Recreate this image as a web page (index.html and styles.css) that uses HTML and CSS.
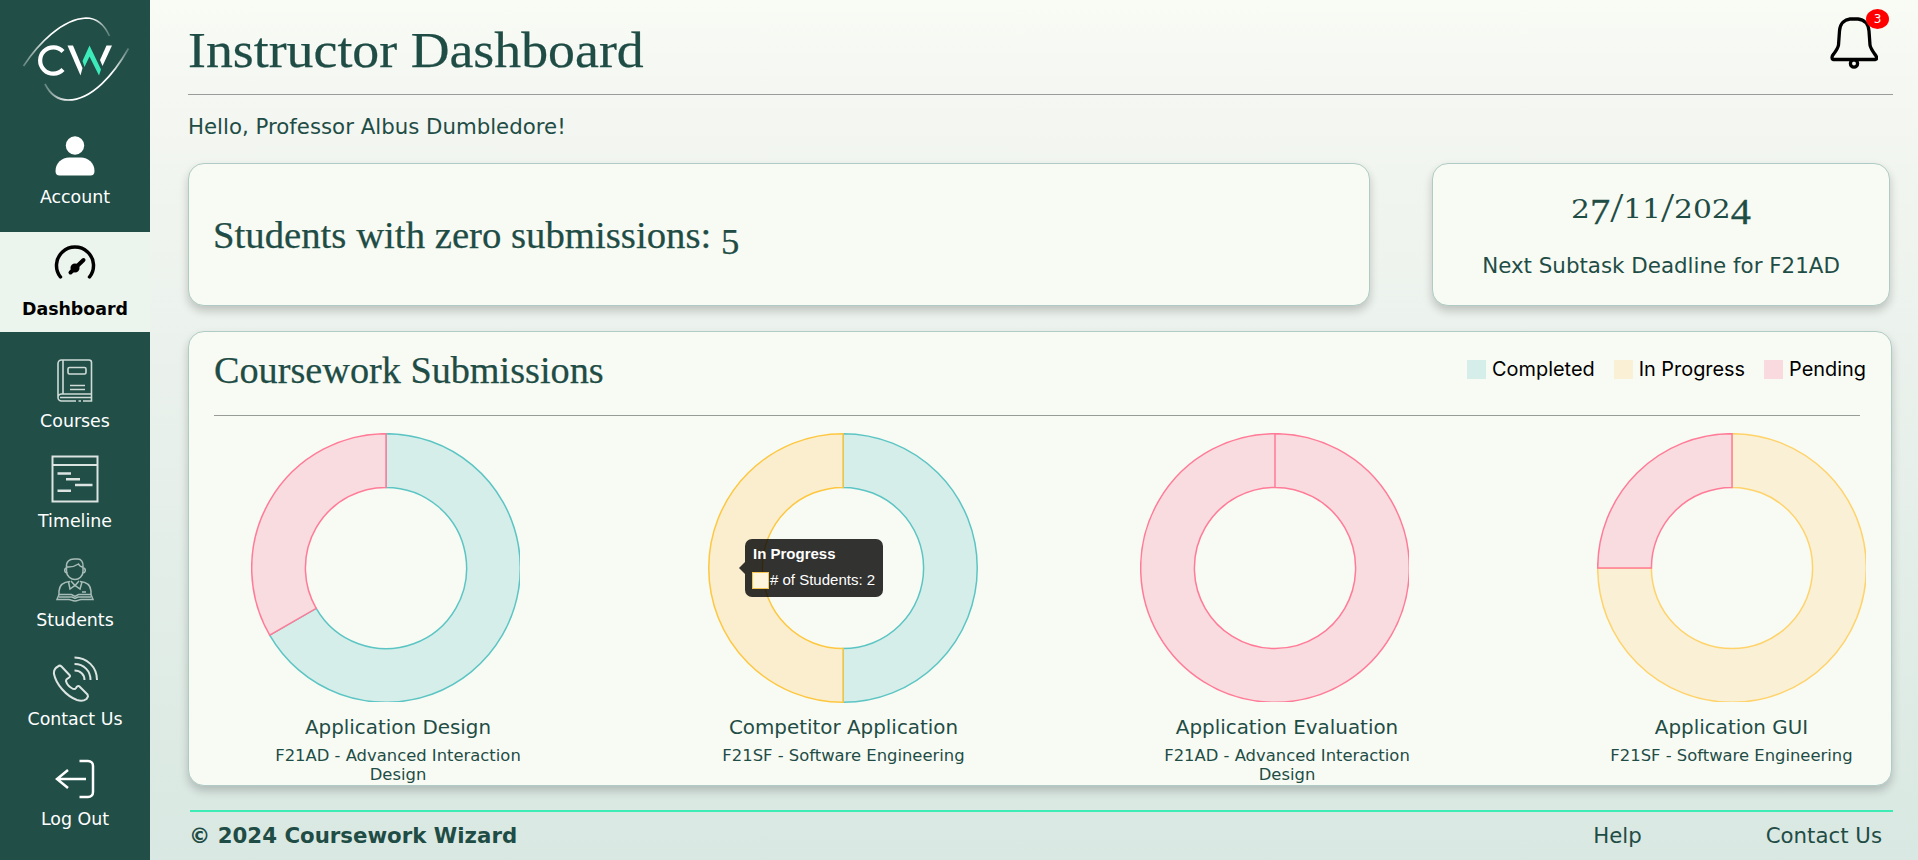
FILE: index.html
```html
<!DOCTYPE html>
<html lang="en">
<head>
<meta charset="utf-8">
<title>Instructor Dashboard</title>
<link rel="stylesheet" href="styles.css">
</head>
<body>
<div class="app">
  <nav class="sidebar">
    <svg class="logo" viewBox="0 0 110 88" width="110" height="88" fill="none">
      <defs>
        <linearGradient id="fadeA" x1="0" x2="1"><stop offset="0" stop-color="#fff" stop-opacity=".3"/><stop offset=".3" stop-color="#fff"/><stop offset=".8" stop-color="#fff"/><stop offset="1" stop-color="#fff" stop-opacity=".25"/></linearGradient>
      </defs>
      <path d="M3.500 50C18 28 42 3 66 2c12 0 19 8 23.500 18" stroke="url(#fadeA)" stroke-width="1.700"/>
      <path d="M25 68c5 10 13 16 23 16C72 84 94 58 108.500 32.500" stroke="url(#fadeA)" stroke-width="1.700"/>
      <path d="M43 35.500A13.200 13.200 0 1 0 43 53.500" stroke="#fff" stroke-width="4.200"/>
      <path d="M47.500 29.500h5.500L62.500 52l-2 7.500z" fill="#fff"/>
      <path d="M62.500 45 69.500 29.500 81 53.500l-2 6L69.500 40.500 64.500 51z" fill="#3cebb9"/>
      <path d="M86.500 29.500h5.500L82.500 50l-2.500-6z" fill="#fff"/>
    </svg>

    <a class="nav-item account">
      <svg viewBox="0 0 40 40" width="40" height="40" fill="#fff"><circle cx="20" cy="9.500" r="9.200"/><path d="M.500 35C.500 27 7 21.500 14 21.500h12c7 0 13.500 5.500 13.500 13.500 0 3-1.500 4.500-4 4.500h-31c-2.500 0-4-1.500-4-4.500z"/></svg>
      <span>Account</span>
    </a>
    <a class="nav-item active">
      <svg viewBox="0 0 44 44" width="44" height="44" fill="none" stroke="#000" stroke-width="3.500" stroke-linecap="round"><path d="M7.500 35A18.500 18.500 0 1 1 36.500 35"/><path d="M17.500 30.500 30.500 18" stroke-width="4"/><circle cx="22" cy="26" r="2.800" fill="#000"/></svg>
      <span>Dashboard</span>
    </a>
    <a class="nav-item courses">
      <svg viewBox="0 0 36 43" width="36" height="43" fill="none" stroke="#d0dbd8" stroke-width="1.600"><path d="M1 38V4.500C1 2.500 2.500 1 4.500 1H32c1.500 0 2.500 1 2.500 2.500V35H4.500A3.500 3.500 0 0 0 4.500 42H19M26 42h8.500V35M21.500 42h2.500M6 1v34M3 38.500h31"/><rect x="11" y="8.500" width="18" height="6.500" rx="1.500"/><path d="M13 26.500h15M13 30.500h15"/></svg>
      <span>Courses</span>
    </a>
    <a class="nav-item timeline">
      <svg viewBox="0 0 48 48" width="48" height="48" fill="none" stroke="#dbe4e1" stroke-width="2"><path d="M1.500 1.500h45v45h-45zM1.500 10h45"/><path d="M6.500 18.500H20M15 24.200h14M24 30h17.500M6.500 35.800H20" stroke-width="2.600"/></svg>
      <span>Timeline</span>
    </a>
    <a class="nav-item students">
      <svg viewBox="0 0 38 44" width="38" height="44" fill="none" stroke="#a9bdb8" stroke-width="1.500"><path d="M10.500 9C10 3.500 13.500 1 18 1h4c3 0 5.500 3 5 7.500v5C27 18 23 21.500 19 21.500S10.500 18 10.500 13.500z"/><path d="M10.500 9c5 .5 9-1 12-3 1 2 2.500 3 4.500 3M10.500 10c-3 1-2 5 1 5M27.500 10c3 1 2 5-1 5"/><path d="M14 23.500C7 24 3.500 27 3 33v3.500M24 23.500c7 .5 10.500 3.500 11 9.500v3.500"/><path d="m12.500 24 1.500 7 5-3.500L24 31l2-7M15 23l4 4.500 4-4.500"/><path d="M3 36.500 1 41.500h12c2 0 3 1.500 6 1.500s4-1.500 6-1.500h12l-2-5H22.500L19 38.500l-3.500-2zM3 39h13l3 1.500L22 39h13M26 34h4"/></svg>
      <span>Students</span>
    </a>
    <a class="nav-item">
      <svg viewBox="0 0 46 46" width="46" height="46" fill="none" stroke="#dbe4e1" stroke-width="2" stroke-linejoin="round"><path d="M6 10.500C3 12 1.500 14 2 18c2 10 12 22 23 26 4 1.300 7 .8 9.500-1l1.500-2.500-.500-2-8-8C26.500 29.500 25 30 24 32c-1 1.500-3 1-4.500 0-2.500-1.500-5-4.500-5.500-7-.3-1.500 1-2 2.500-3s2-2 1-3l-8-8.500c-1-1-2.500-1-3.500 0z"/><path d="M22.500 1.500C35 1.500 45 11 45 24M22.500 8C32 8 38.500 15 38.500 24M22.500 14.500c6 0 10 4 10 9.500"/></svg>
      <span>Contact Us</span>
    </a>
    <a class="nav-item logout">
      <svg viewBox="0 0 40 40" width="40" height="40" fill="none" stroke="#fff" stroke-width="2.500"><path d="M24.500 2H33c3 0 5 2 5 5v26c0 3-2 5-5 5h-8.500M31 20H2M13 11 2 20l11 9"/></svg>
      <span>Log Out</span>
    </a>
  </nav>

  <main class="main">
    <header class="header">
      <h1 class="serif title">Instructor Dashboard</h1>
      <div class="bell">
        <svg viewBox="0 0 48 54" width="48" height="54" fill="none" stroke="#000" stroke-width="3.300" stroke-linejoin="round"><path d="M3 43.500C1.500 43 1.800 40 3.300 38.500 6 35 8 32 8.500 29L9.500 15C10 7 15 3.500 20 3h8c6 .5 10.500 5 11 12l1 14c.5 3 2.500 6 5 9.500 1.500 1.500 2.500 4.500.5 5z"/><circle cx="24" cy="47.500" r="3.600"/></svg>
        <span class="badge">3</span>
      </div>
    </header>
    <p class="hello">Hello, Professor Albus Dumbledore!</p>

    <section class="stats">
      <div class="card zero"><h2 class="serif heading">Students with zero submissions: <span class="low">5</span></h2></div>
      <div class="card deadline">
        <div class="date"><span class="mid">2</span><span class="low">7</span><span class="slash">/</span><span class="mid">11</span><span class="slash">/</span><span class="mid">202</span><span class="low">4</span></div>
        <p class="next">Next Subtask Deadline for F21AD</p>
      </div>
    </section>

    <section class="card submissions">
      <div class="sub-head">
        <h2 class="serif heading cs">Coursework Submissions</h2>
        <ul class="legend">
          <li><i class="sw done"></i>Completed</li>
          <li><i class="sw prog"></i>In Progress</li>
          <li><i class="sw pend"></i>Pending</li>
        </ul>
      </div>
      <div class="charts">
        <figure class="chart wide">
          <svg class="donut" viewBox="0 0 269 269" width="269" height="269">
            <path class="s-done" d="M135 .700A134.300 134.300 0 1 1 18.700 202.150L65.200 175.300A80.600 80.600 0 1 0 135 54.400z"/>
            <path class="s-pend" d="M18.700 202.150A134.300 134.300 0 0 1 135 .700V54.400A80.600 80.600 0 0 0 65.200 175.300z"/>
          </svg>
          <figcaption><b>Application Design</b><span>F21AD - Advanced Interaction Design</span></figcaption>
        </figure>
        <figure class="chart second">
          <svg class="donut" viewBox="0 0 269 269" width="269" height="269">
            <path class="s-done" d="M134 .700A134.300 134.300 0 0 1 134 269.300V215.600A80.600 80.600 0 0 0 134 54.400z"/>
            <path class="s-prog hot" d="M134 269.300A134.300 134.300 0 0 1 134 .700V54.400A80.600 80.600 0 0 0 134 215.600z"/>
          </svg>
          <div class="tooltip"><strong>In Progress</strong><div class="row"><i></i># of Students: 2</div></div>
          <figcaption><b>Competitor Application</b><span>F21SF - Software Engineering</span></figcaption>
        </figure>
        <figure class="chart wide">
          <svg class="donut" viewBox="0 0 269 269" width="269" height="269">
            <path class="s-pend" fill-rule="evenodd" d="M135 .700A134.300 134.300 0 1 1 134.990 .700V54.400A80.600 80.600 0 1 0 135 54.400z"/>
          </svg>
          <figcaption><b>Application Evaluation</b><span>F21AD - Advanced Interaction Design</span></figcaption>
        </figure>
        <figure class="chart">
          <svg class="donut" viewBox="0 0 269 269" width="269" height="269">
            <path class="s-prog" d="M135 .700A134.300 134.300 0 1 1 .700 135H54.400A80.600 80.600 0 1 0 135 54.400z"/>
            <path class="s-pend" d="M.700 135A134.300 134.300 0 0 1 135 .700V54.400A80.600 80.600 0 0 0 54.400 135z"/>
          </svg>
          <figcaption><b>Application GUI</b><span>F21SF - Software Engineering</span></figcaption>
        </figure>
      </div>
    </section>

    <footer class="footer">
      <strong>© 2024 Coursework Wizard</strong>
      <span class="links"><a>Help</a><a>Contact Us</a></span>
    </footer>
  </main>
</div>
</body>
</html>
```

FILE: styles.css
```css
* { box-sizing: border-box; margin: 0; padding: 0; }
body { font-family: "DejaVu Sans", sans-serif; color: #1f4d46; }
.app { display: flex; width: 1918px; height: 860px; overflow: hidden; background: linear-gradient(#f9fbf5 0, #f3f6f1 14%, #d9e8e2 100%); }

/* Sidebar */
.sidebar { width: 150px; height: 860px; flex: none; background: #214e47; color: #fff; display: flex; flex-direction: column; }
.logo { margin: 16px 0 0 20px; flex: none; display: block; }
.nav-item { height: 99.500px; display: flex; flex-direction: column; align-items: center; justify-content: flex-end; padding-bottom: 1px; font-size: 17.400px; line-height: 20px; flex: none; }
.nav-item svg { flex: none; }
.nav-item span { white-space: nowrap; margin-top: 7px; }
.account { height: 128px; padding-bottom: 25px; }
.account span { margin-top: 11px; }
.active { height: 100px; background: #ebf4ed; color: #000; font-weight: bold; padding-bottom: 13px; }
.active span { margin-top: 13px; }
.courses span { margin-top: 9px; }
.logout span { margin-top: 10px; }
.students span { margin-top: 8px; }
.timeline { padding-bottom: 0; }
.timeline span { margin-top: 8px; }

/* Header */
.main { width: 1705px; margin-left: 38px; flex: none; display: flex; flex-direction: column; }
.header { height: 95px; border-bottom: 1px solid #9a9c9c; display: flex; justify-content: space-between; }
.serif { font-family: "Liberation Serif", serif; font-weight: normal; white-space: nowrap; transform-origin: left center; -webkit-text-stroke: .25px #1f4d46; }
.title { font-size: 51px; line-height: 60px; padding-top: 20px; transform: scaleX(1.055); }
.bell { width: 48px; margin: 16px 15px 0 0; position: relative; }
.bell svg { display: block; }
.badge { position: absolute; left: 36px; top: -7px; width: 23px; height: 20px; border-radius: 50%; background: #f00; color: #fff; font-size: 12px; line-height: 21px; text-align: center; }
.hello { font-size: 21.300px; line-height: 26px; margin: 19px 0 23px; white-space: nowrap; }

/* Cards */
.card { background: #f8fbf4; border: 1px solid #b0cbc5; border-radius: 16px; box-shadow: 0 5px 10px rgba(0, 0, 0, .2); }
.stats { display: flex; justify-content: space-between; height: 143px; width: 1702px; }
.zero { width: 1182px; padding: 2px 0 0 24px; display: flex; align-items: center; }
.heading { font-size: 37px; line-height: 40px; transform: scaleX(1.047); }
.low { vertical-align: -6px; line-height: 0; }
.heading .low { font-size: 35px; }
.deadline { width: 458px; text-align: center; }
.date { font-family: "DejaVu Serif", serif; line-height: 40px; margin-top: 25px; height: 50px; white-space: nowrap; transform: scaleX(1.12); }
.date .mid { font-size: 26.500px; }
.date .low, .date .slash { font-family: "Liberation Serif", serif; font-size: 36px; }
.date .low { -webkit-text-stroke: .3px #1f4d46; }
.date .slash { vertical-align: -4px; font-size: 42px; line-height: 0; }
.next { font-size: 21.400px; line-height: 26px; margin-top: 14px; white-space: nowrap; }

.submissions { margin-top: 25px; height: 455px; width: 1704px; padding: 0 25px; }
.sub-head { height: 84px; width: 1646px; border-bottom: 1px solid #979c98; display: flex; justify-content: space-between; }
.cs { padding-top: 19px; transform: scaleX(1.033); }
.legend { display: flex; list-style: none; gap: 19px; margin: 25px -6px 0 0; font: 19.900px/24px Inter, sans-serif; color: #000; }
.legend li { display: flex; align-items: center; height: 24px; white-space: nowrap; }
.sw { width: 19px; height: 19px; margin-right: 6px; }
.done { background: #d6eeea; }
.prog { background: #f9f0d5; }
.pend { background: #f9dbdf; }

/* Charts */
.charts { display: flex; justify-content: space-between; margin: 17px 0 0 37px; width: 1615px; }
.chart { width: 269px; position: relative; }
.chart.wide { width: 294px; }
.chart.second { margin: 0 -1px 0 1px; }
.second .donut { overflow: visible; }
.donut { display: block; }
.donut path { stroke-width: 1.500; }
.s-done { fill: #d6eeea; stroke: #5cc5c4; }
.s-prog { fill: #f9f0d5; stroke: #ffd36b; }
.s-prog.hot { fill: #faeecf; stroke: #fdc740; }
.s-pend { fill: #f9dcdf; stroke: #ff7b98; }
figcaption { text-align: center; padding-top: 13px; }
figcaption b { display: block; font-weight: normal; font-size: 19.900px; line-height: 26px; white-space: nowrap; }
figcaption span { display: block; font-size: 16.400px; line-height: 19px; margin: 5px 5px 0; }
.tooltip { position: absolute; left: 36px; top: 106px; width: 138px; height: 58px; border-radius: 7px; background: rgba(0, 0, 0, .8); color: #fff; font: 15px/18px "Liberation Sans", sans-serif; padding: 6px 7px 0 8px; white-space: nowrap; }
.tooltip::before { content: ""; position: absolute; left: -6px; top: 23px; border: 6px solid transparent; border-left: 0; border-right-color: rgba(0, 0, 0, .8); }
.tooltip strong { display: block; }
.tooltip .row { display: flex; align-items: center; margin-top: 7px; }
.tooltip i { width: 17px; height: 17px; margin: 2px 1px 0 -1px; background: #fff5dd; border: 1px solid #f5c451; }

/* Footer */
.footer { margin: 24px 0 0 2px; width: 1703px; border-top: 2px solid #3cecb4; display: flex; justify-content: space-between; font-size: 21.300px; line-height: 26px; padding: 11px 11px 0 0; white-space: nowrap; }
.footer strong { margin-left: -1px; }
.links { display: flex; gap: 124px; }
```
